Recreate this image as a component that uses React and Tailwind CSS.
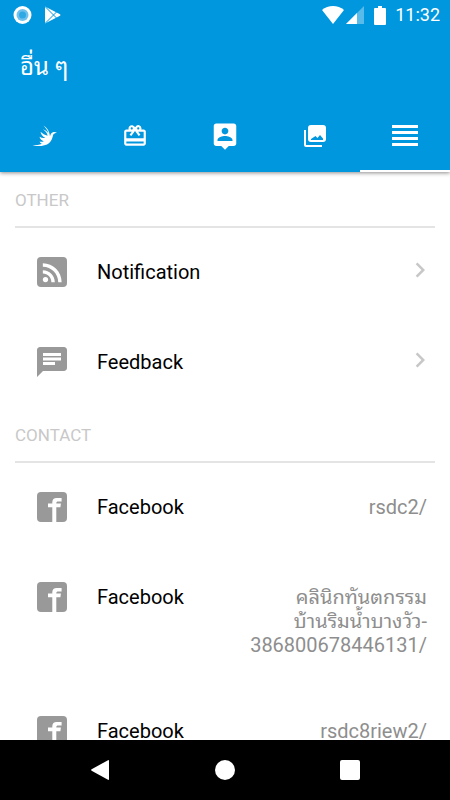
import { MdChevronRight, MdRedeem, MdRssFeed } from 'react-icons/md';

const TABS = [
  { id: 'home', label: 'Home', icon: BirdIcon },
  { id: 'rewards', label: 'Rewards', icon: () => <MdRedeem size={26} /> },
  { id: 'doctors', label: 'Doctors', icon: PersonPinIcon },
  { id: 'gallery', label: 'Gallery', icon: GalleryIcon },
  { id: 'more', label: 'More', icon: MenuIcon },
];

const OTHER = [
  { label: 'Notification', icon: RssIcon },
  { label: 'Feedback', icon: ChatIcon },
];

const CONTACT = [
  ['rsdc2/'],
  ['คลินิกทันตกรรม', 'บ้านริมน้ำบางวัว-', '386800678446131/'],
  ['rsdc8riew2/'],
];

function BirdIcon() {
  return (
    <svg width="26" height="24" viewBox="0 0 26 24" fill="currentColor">
      <path d="M.5 21.400C4 21.400 7.500 20.900 10 19.700C8.800 19.300 8 18.500 7.600 17.400C9 18 10.400 18 11.800 17.200C9.500 16.600 8 15 7.500 12.800C9.500 13.900 11.200 14.300 13.200 13.800C10.600 12.600 9 10.500 8.500 7.800C10.500 9.800 12.800 11 15.600 11.800C15.300 9.300 13.700 7.200 10.800 5.200C13.200 5.900 15 7.200 16.400 9.200C15.600 6.200 13.800 4.200 11.600 1.500C15.200 3.800 17.400 7.200 18 12.300C18.600 9.700 19.900 8.200 21.700 8C23 7.900 24 8.300 25 9C23.200 9 21.700 9.500 21.100 11C20.400 13.700 20 16.500 17.200 19C13.400 22.200 6 22.800 .5 21.400Z" />
    </svg>
  );
}

function PersonPinIcon() {
  return (
    <svg width="30" height="30" viewBox="0 0 24 24" fill="currentColor">
      <path d="M19 2H5c-1.110 0-2 .9-2 2v14c0 1.100.89 2 2 2h4l3 3 3-3h4c1.100 0 2-.9 2-2V4c0-1.100-.9-2-2-2zm-7 3.300c1.490 0 2.700 1.210 2.700 2.700 0 1.490-1.210 2.700-2.700 2.700-1.490 0-2.700-1.210-2.700-2.700 0-1.490 1.210-2.700 2.700-2.700zM18 16H6v-.9c0-2 4-3.100 6-3.100s6 1.100 6 3.100v.9z" />
    </svg>
  );
}

function GalleryIcon() {
  return (
    <svg width="22" height="22" viewBox="0 0 22 22" fill="currentColor">
      <path d="M0 5h2v15h16v2H2a2 2 0 0 1-2-2z" />
      <path
        fillRule="evenodd"
        d="M7 0h12a3 3 0 0 1 3 3v11a3 3 0 0 1-3 3H7a3 3 0 0 1-3-3V3a3 3 0 0 1 3-3zM7 15h12v-1.500l-3-3.500-2.500 3-2-2L7 14z"
      />
    </svg>
  );
}

function MenuIcon() {
  return (
    <svg width="26" height="22" viewBox="0 0 26 22" fill="currentColor">
      <path d="M0 0h26v3H0zM0 6h26v3H0zM0 12h26v3H0zM0 18h26v3H0z" />
    </svg>
  );
}

function RssIcon() {
  return (
    <span className="flex size-[30px] items-center justify-center rounded bg-[#999] text-white">
      <MdRssFeed size={29} />
    </span>
  );
}

function ChatIcon() {
  return (
    <svg width="30" height="30" viewBox="2 2 20 20" fill="#999">
      <path d="M20 2H4c-1.100 0-2 .9-2 2v18l4-4h14c1.100 0 2-.9 2-2V4c0-1.100-.9-2-2-2zM6 9h12v2H6V9zm8 5H6v-2h8v2zm4-6H6V6h12v2z" />
    </svg>
  );
}

function FacebookIcon() {
  return (
    <svg width="30" height="30" viewBox="0 0 30 30">
      <rect width="30" height="30" rx="4" fill="#999" />
      <path
        fill="#fff"
        d="M15.300 30V15.300H11V11.600H15.300V10.200C15.300 7.400 16.900 5.900 19.600 5.900H24.600V9.600H21.100C19.900 9.600 19.300 10.200 19.300 11.200V11.600H23.900L23.400 15.300H19.300V30Z"
      />
    </svg>
  );
}

function StatusBar() {
  return (
    <div className="flex h-[30px] items-center justify-between pl-[13px] pr-[10px]">
      <div className="flex items-center gap-3">
        <svg width="19" height="20" viewBox="0 0 19 20">
          <circle cx="9.500" cy="10" r="9" fill="#fff" />
          <circle cx="9.500" cy="10" r="6" fill="#6ec1ec" />
          <circle cx="9.500" cy="10" r="3.500" fill="#2fa8e3" />
        </svg>
        <svg width="18" height="20" viewBox="0 0 18 20">
          <path d="M1 1.500L16 9.300q1 .7 0 1.400L1 18.500z" fill="#fff" />
          <path d="M1 1.500L12.500 13M1 18.500L12.500 7" stroke="#0097de" strokeWidth="1" />
        </svg>
      </div>
      <div className="flex items-center">
        <svg width="22" height="18" viewBox="0 0 22 18" fill="#fff">
          <path d="M11 18L0 4C6-1.300 16-1.300 22 4z" />
        </svg>
        <svg className="ml-[2px]" width="18" height="18" viewBox="0 0 18 18" fill="#fff">
          <path d="M18 0v18H0z" opacity=".35" />
          <path d="M11 7v11H0z" />
        </svg>
        <svg className="ml-[10px]" width="12" height="19" viewBox="0 0 12 19" fill="#fff">
          <path d="M4 0h4v2h3q1 0 1 1v15q0 1-1 1H1q-1 0-1-1V3q0-1 1-1h3z" />
        </svg>
        <span className="ml-[9px] text-lg leading-5">11:32</span>
      </div>
    </div>
  );
}

function SectionTitle({ children }) {
  return (
    <h2 className="mx-[15px] flex h-[55px] items-center border-b-2 border-[#e4e4e4] pt-[2px] text-[17px] text-[#c8c8c8]">
      {children}
    </h2>
  );
}

function Row({ icon: Icon, label, children }) {
  return (
    <li>
      <a href="#" className="flex min-h-[90px] items-start pl-[37px] pr-[23px] pt-8 pb-[30px] text-xl leading-6">
        <span className="-mt-[3px] mr-[30px] shrink-0">
          <Icon />
        </span>
        <span className="flex-1 text-black">{label}</span>
        {children}
      </a>
    </li>
  );
}

export default function App() {
  return (
    <div className="flex h-screen flex-col overflow-hidden bg-white font-[Roboto,'Noto_Sans_Thai_Looped','Noto_Sans_Thai','Noto_Sans',sans-serif]">
      <header className="relative shrink-0 bg-[#0097de] text-white shadow-[0_1px_4px_rgba(0,0,0,0.45)]">
        <StatusBar />
        <h1 className="flex h-[70px] items-center px-5 pt-1 text-2xl">อื่น ๆ</h1>
        <nav className="flex h-[72px]">
          {TABS.map(({ id, label, icon: Icon }) => (
            <button
              key={id}
              type="button"
              aria-label={label}
              className={`flex flex-1 items-center justify-center border-b-2 pt-[2px] ${id === 'more' ? 'border-white' : 'border-transparent'}`}
            >
              <Icon />
            </button>
          ))}
        </nav>
      </header>

      <main className="min-h-0 flex-1 overflow-y-auto pt-px [scrollbar-width:none]">
        <SectionTitle>OTHER</SectionTitle>
        <ul>
          {OTHER.map(({ label, icon }) => (
            <Row key={label} icon={icon} label={label}>
              <MdChevronRight size={30} className="-mt-[5px] -mr-2 text-[#c7c7c7]" />
            </Row>
          ))}
        </ul>
        <SectionTitle>CONTACT</SectionTitle>
        <ul>
          {CONTACT.map((lines) => (
            <Row key={lines[0]} icon={FacebookIcon} label="Facebook">
              <span className="text-right text-[#8e8e8e]">
                {lines.map((line) => (
                  <span key={line} className="block">
                    {line}
                  </span>
                ))}
              </span>
            </Row>
          ))}
        </ul>
      </main>

      <footer className="flex h-[60px] shrink-0 bg-black px-[37px] text-white">
        <button type="button" aria-label="Back" className="flex flex-1 items-center justify-center">
          <svg width="18" height="20" viewBox="0 0 18 20" fill="currentColor">
            <path d="M17 .2q1-.4 1 .8v18q0 1.200-1 .8L.6 10.700q-.9-.7 0-1.400z" />
          </svg>
        </button>
        <button type="button" aria-label="Home" className="flex flex-1 items-center justify-center">
          <span className="size-5 rounded-full bg-white" />
        </button>
        <button type="button" aria-label="Recent apps" className="flex flex-1 items-center justify-center">
          <span className="size-5 rounded-xs bg-white" />
        </button>
      </footer>
    </div>
  );
}
